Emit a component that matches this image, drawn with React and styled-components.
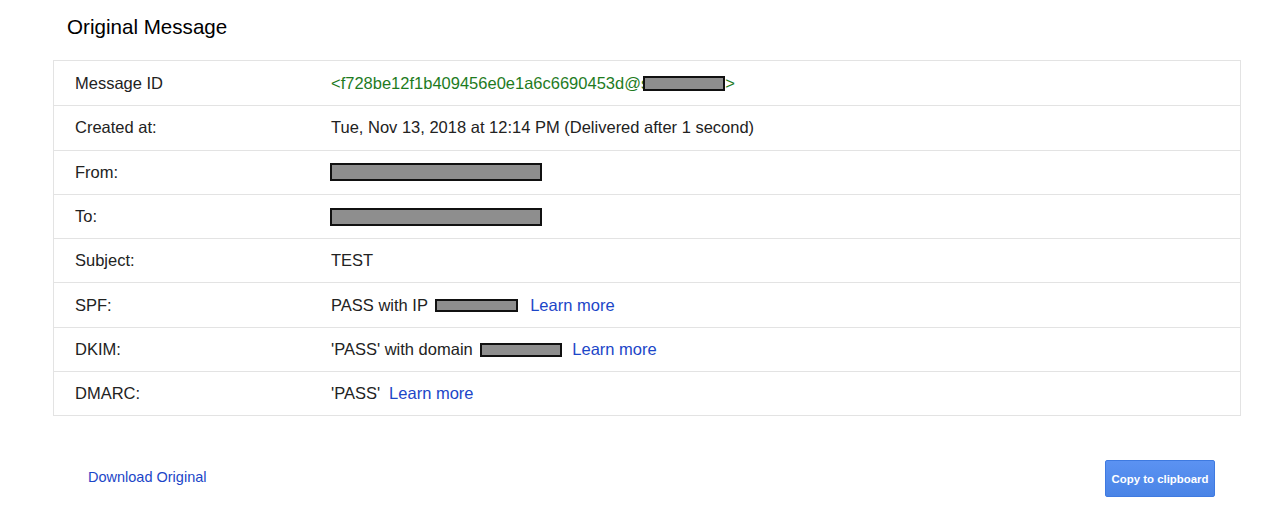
import React from "react";
import styled, { createGlobalStyle } from "styled-components";

const Global = createGlobalStyle`
  html, body { margin: 0; padding: 0; background: #fff; }
  body { font-family: "Liberation Sans", Arial, sans-serif; color: #222; }
`;

const Page = styled.div`
  width: 1280px;
  height: 526px;
  box-sizing: border-box;
  padding: 13px 39px 0 53px;
`;

const Title = styled.h1`
  margin: 0 0 19px 14px;
  font-size: 20.6px;
  font-weight: 400;
  line-height: 28px;
  color: #000;
`;

const Table = styled.div`
  border: 1px solid #e3e3e3;
`;

const Row = styled.div`
  display: grid;
  grid-template-columns: 256px 1fr;
  align-items: center;
  height: 44.3px;
  box-sizing: border-box;
  padding: 0 21px;
  font-size: 16.5px;
  color: #222;
  & + & { border-top: 1px solid #e3e3e3; }
`;

const Label = styled.div``;

const Value = styled.div`
  display: flex;
  align-items: center;
  white-space: pre;
  color: ${(p) => (p.$green ? "#1e7b1e" : "#222")};
`;

const Redact = styled.span`
  display: inline-block;
  width: ${(p) => p.$w}px;
  height: ${(p) => p.$h || 14}px;
  background: #8e8e8e;
  border: 2px solid #111;
  box-sizing: border-box;
  margin: ${(p) => p.$m || "0"};
`;

const Link = styled.a`
  color: #1c46c8;
  text-decoration: none;
  cursor: pointer;
  margin-left: ${(p) => p.$ml || 0}px;
`;

const Footer = styled.div`
  display: flex;
  justify-content: space-between;
  align-items: center;
  margin-top: 44px;
  padding: 0 26px 0 35px;
`;

const Download = styled.a`
  font-size: 14.5px;
  color: #1c46c8;
  text-decoration: none;
  margin-top: -3px;
`;

const Button = styled.button`
  width: 110px;
  height: 37px;
  border: 1px solid #3f7ae0;
  border-radius: 2px;
  background: linear-gradient(#5b92f2, #4a84e6);
  color: #fff;
  font-family: "Liberation Sans", Arial, sans-serif;
  font-weight: 700;
  font-size: 11.4px;
  padding: 0;
  cursor: pointer;
`;

export default function App() {
  return (
    <>
      <Global />
      <Page>
        <Title>Original Message</Title>
        <Table>
          <Row>
            <Label>Message ID</Label>
            <Value $green>
              &lt;f728be12f1b409456e0e1a6c6690453d@s<Redact $w={82} $h={15} $m="0 0 0 -6px" />&gt;
            </Value>
          </Row>
          <Row>
            <Label>Created at:</Label>
            <Value>Tue, Nov 13, 2018 at 12:14 PM (Delivered after 1 second)</Value>
          </Row>
          <Row>
            <Label>From:</Label>
            <Value><Redact $w={212} $h={18} $m="0 0 0 -1px" /></Value>
          </Row>
          <Row>
            <Label>To:</Label>
            <Value><Redact $w={212} $h={18} $m="0 0 0 -1px" /></Value>
          </Row>
          <Row>
            <Label>Subject:</Label>
            <Value>TEST</Value>
          </Row>
          <Row>
            <Label>SPF:</Label>
            <Value>
              PASS with IP <Redact $w={83} $h={13} $m="0 0 0 3px" />
              <Link $ml={12}>Learn more</Link>
            </Value>
          </Row>
          <Row>
            <Label>DKIM:</Label>
            <Value>
              'PASS' with domain <Redact $w={82} $h={14} $m="2px 0 0 3px" />
              <Link $ml={10}>Learn more</Link>
            </Value>
          </Row>
          <Row>
            <Label>DMARC:</Label>
            <Value>
              'PASS'<Link $ml={9}>Learn more</Link>
            </Value>
          </Row>
        </Table>
        <Footer>
          <Download>Download Original</Download>
          <Button>Copy to clipboard</Button>
        </Footer>
      </Page>
    </>
  );
}
